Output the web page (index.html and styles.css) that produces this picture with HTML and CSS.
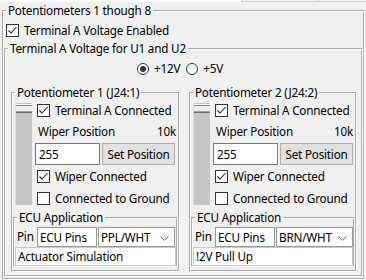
FILE: index.html
```html
<!DOCTYPE html>
<html>
<head>
<meta charset="utf-8">
<link rel="stylesheet" href="styles.css">
</head>
<body>
<div class="tabs"><div class="tab-sel"></div><div class="tab"></div><div class="tab tab-last"></div></div>
<fieldset class="grp outer">
  <legend class="lg">Potentiometers 1 though 8</legend>
  <div class="cbrow top-cb"><span class="cb checked"><svg width="11" height="11" viewBox="0 0 11 11"><polyline points="1.5,5.5 4,8 9.5,2" fill="none" stroke="#222" stroke-width="1.1"/></svg></span><span>Terminal A Voltage Enabled</span></div>
  <fieldset class="grp term">
    <legend class="lg">Terminal A Voltage for U1 and U2</legend>
    <div class="radios">
      <span class="rad on"><span class="dot"></span></span><span class="rlabel">+12V</span>
      <span class="rad"></span><span class="rlabel">+5V</span>
    </div>
    <div class="pots">
      <fieldset class="grp pot">
        <legend class="lg">Potentiometer 1 (J24:1)</legend>
        <div class="pot-body">
          <div class="slider"><div class="thumb"></div></div>
          <div class="pcol">
            <div class="cbrow"><span class="cb checked"><svg width="11" height="11" viewBox="0 0 11 11"><polyline points="1.5,5.5 4,8 9.5,2" fill="none" stroke="#222" stroke-width="1.1"/></svg></span><span>Terminal A Connected</span></div>
            <div class="wrow"><span>Wiper Position</span><span>10k</span></div>
            <div class="irow"><div class="input">255</div><div class="btn">Set Position</div></div>
            <div class="cbrow"><span class="cb checked"><svg width="11" height="11" viewBox="0 0 11 11"><polyline points="1.5,5.5 4,8 9.5,2" fill="none" stroke="#222" stroke-width="1.1"/></svg></span><span>Wiper Connected</span></div>
            <div class="cbrow"><span class="cb"></span><span>Connected to Ground</span></div>
          </div>
        </div>
        <fieldset class="grp ecu">
          <legend class="lg">ECU Application</legend>
          <div class="pinrow"><span class="pin">Pin</span><div class="box pins">ECU Pins</div><div class="box sel"><span>PPL/WHT</span><svg width="9" height="6" viewBox="0 0 9 6"><polyline points="0.5,0.5 4.5,4.5 8.5,0.5" fill="none" stroke="#707070" stroke-width="1"/></svg></div></div>
          <div class="box app">Actuator Simulation</div>
        </fieldset>
      </fieldset>
      <fieldset class="grp pot">
        <legend class="lg">Potentiometer 2 (J24:2)</legend>
        <div class="pot-body">
          <div class="slider"><div class="thumb"></div></div>
          <div class="pcol">
            <div class="cbrow"><span class="cb checked"><svg width="11" height="11" viewBox="0 0 11 11"><polyline points="1.5,5.5 4,8 9.5,2" fill="none" stroke="#222" stroke-width="1.1"/></svg></span><span>Terminal A Connected</span></div>
            <div class="wrow"><span>Wiper Position</span><span>10k</span></div>
            <div class="irow"><div class="input">255</div><div class="btn">Set Position</div></div>
            <div class="cbrow"><span class="cb checked"><svg width="11" height="11" viewBox="0 0 11 11"><polyline points="1.5,5.5 4,8 9.5,2" fill="none" stroke="#222" stroke-width="1.1"/></svg></span><span>Wiper Connected</span></div>
            <div class="cbrow"><span class="cb"></span><span>Connected to Ground</span></div>
          </div>
        </div>
        <fieldset class="grp ecu">
          <legend class="lg">ECU Application</legend>
          <div class="pinrow"><span class="pin">Pin</span><div class="box pins">ECU Pins</div><div class="box sel"><span>BRN/WHT</span><svg width="9" height="6" viewBox="0 0 9 6"><polyline points="0.5,0.5 4.5,4.5 8.5,0.5" fill="none" stroke="#707070" stroke-width="1"/></svg></div></div>
          <div class="box app">!2V Pull Up</div>
        </fieldset>
      </fieldset>
    </div>
  </fieldset>
</fieldset>
</body>
</html>
```
FILE: styles.css
```css
* { box-sizing: border-box; }
html, body { margin: 0; padding: 0; }
body {
  width: 366px; height: 280px; overflow: hidden;
  background: #f0f0f0;
  font-family: "Noto Sans", "Open Sans", sans-serif;
  font-size: 11.7px; letter-spacing: -0.2px; line-height: 15px; color: #000;
}
.tabs { display: flex; height: 2px; }
.tab-sel { width: 241px; background: #fff; }
.tab { width: 77px; border-left: 1px solid #d0d0d0; border-bottom: 1px solid #d0d0d0; background: #f0f0f0; }
.tab-last { flex: 1; }
.grp {
  margin: 0; padding: 0; min-width: 0;
  border: 2px groove #ffffff;
}
.lg { padding: 0 2px; margin-left: 2px; line-height: 15px; }
.outer { margin: 1px 1px 0 2px; height: 277px; }
.cbrow { display: flex; align-items: center; height: 15px; gap: 5px; white-space: nowrap; }
.top-cb { margin: 5px 0 0 2px; }
.cb {
  width: 13px; height: 13px; flex: none; background: #fff;
  border: 1px solid #333; display: flex; align-items: center; justify-content: center;
}
.term { margin: 3px 0 0 0; height: 236px; }
.radios { display: flex; align-items: center; height: 15px; margin-top: 5px; padding-left: 131px; }
.rad { width: 12px; height: 12px; border: 1px solid #333; border-radius: 50%; background: #fff; display: flex; align-items: center; justify-content: center; flex: none; }
.dot { width: 6px; height: 6px; border-radius: 50%; background: #333; }
.rlabel { margin-left: 5px; margin-right: 6px; }
.pots { display: flex; gap: 9px; margin: 9px 0 0 5px; }
.pot { width: 169px; height: 187px; }
.pot + .pot { width: 168px; }
.pot-body { display: flex; padding: 3px 0 0 2px; }
.slider { width: 17px; height: 102px; background: #c6c6c6; flex: none; padding-top: 1px; border-left: 1px solid #dadada; }
.thumb { height: 9px; background: #f0f0f0; border-top: 1px solid #fff; border-bottom: 1px solid #6a6a6a; box-shadow: inset 0 1px 0 #888, inset 0 -1px 0 #a0a0a0; }
.pcol { flex: 1; margin-left: 3px; margin-right: 2px; }
.pcol .cbrow { padding-left: 2px; }
.wrow { display: flex; justify-content: space-between; margin-top: 6px; padding: 0 0 0 3px; height: 15px; }
.irow { display: flex; gap: 2px; margin-top: 4px; height: 22px; }
.input { width: 65px; background: #fff; border: 1px solid #7a7a7a; padding: 3px 0 0 3px; }
.btn { width: 73px; background: #e1e1e1; border: 1px solid #adadad; text-align: center; padding-top: 3px; }
.irow + .cbrow { margin-top: 4px; }
.cbrow + .cbrow { margin-top: 7px; }
.ecu { margin: 4px 0 0 0; height: 57px; }
.ecu .lg { margin-left: 2px; }
.pinrow { display: flex; height: 20px; margin-top: 2px; }
.pin { width: 22px; padding: 2px 0 0 2px; }
.box { background: #fff; border: 1px solid #9a9a9a; padding: 2px 0 0 2px; white-space: nowrap; }
.pins { width: 60px; }
.sel { width: 77px; margin-left: 1px; display: flex; justify-content: space-between; align-items: flex-start; padding-right: 5px; }
.sel svg { margin-top: 6px; }
.app { height: 19px; margin-top: 0; padding-top: 1px; border-color: #c8c8c8; }
```
